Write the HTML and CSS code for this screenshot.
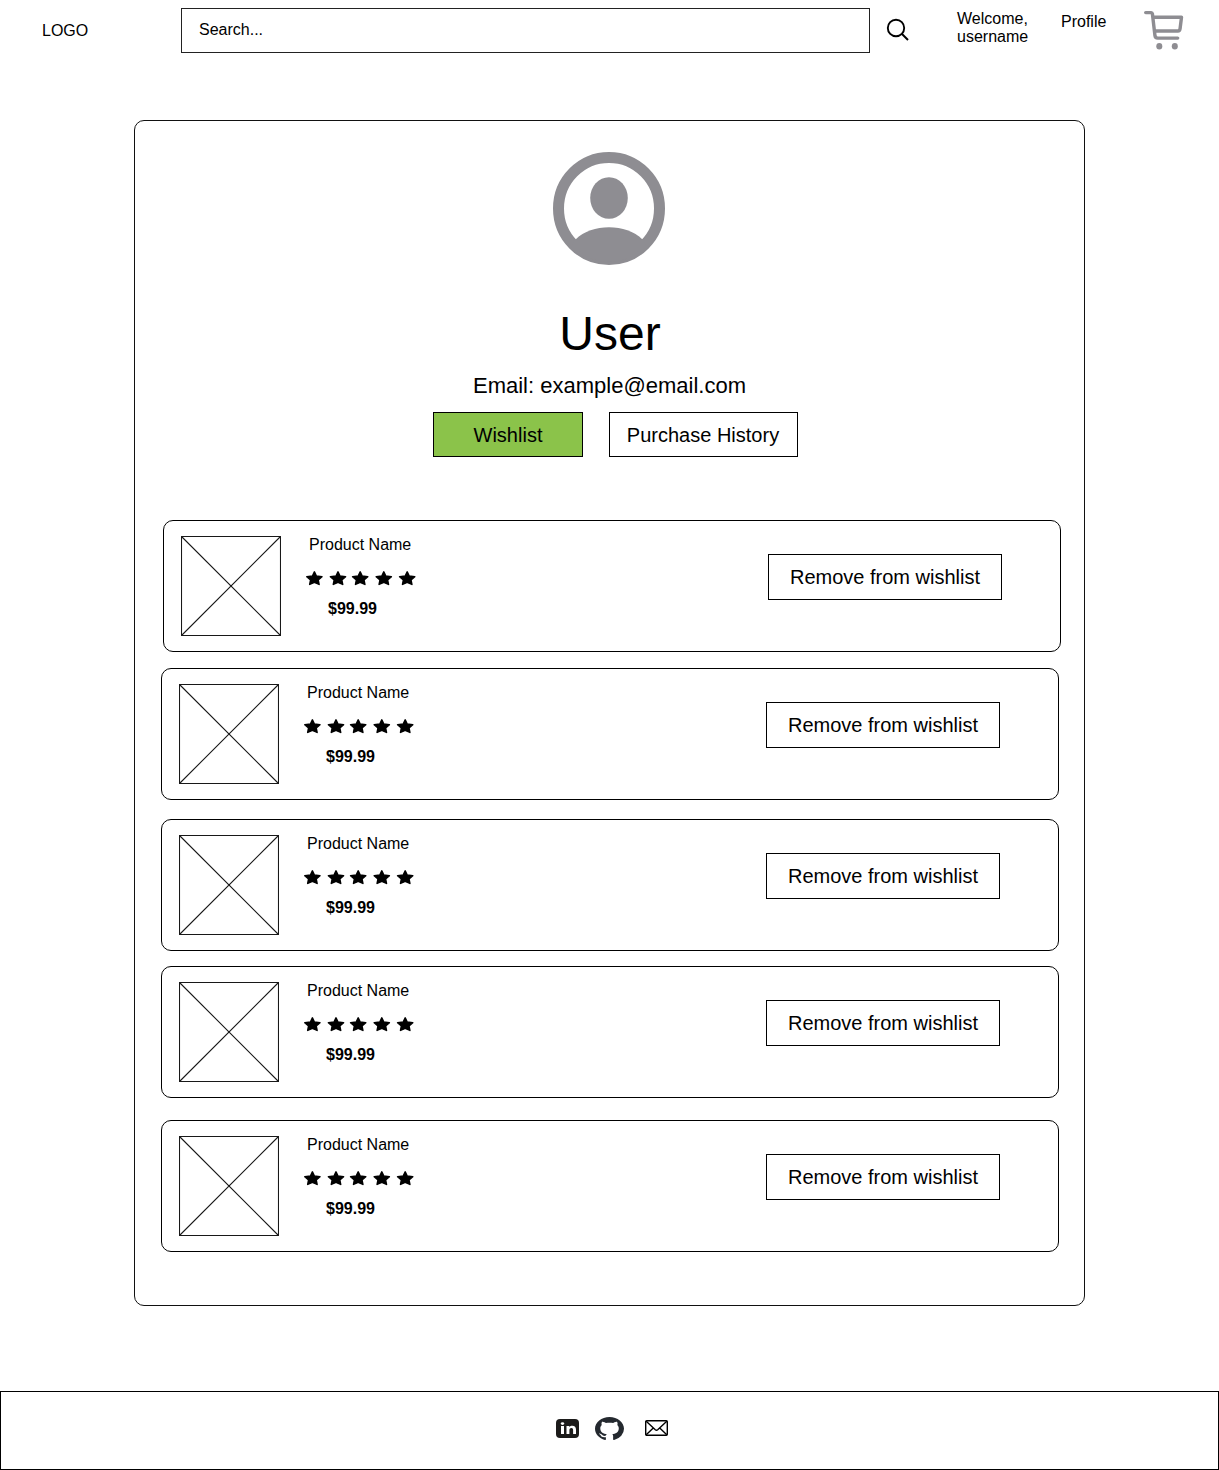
FILE: index.html
```html
<!DOCTYPE html>
<html lang="en">
<head>
<meta charset="utf-8">
<title>User profile</title>
<link rel="stylesheet" href="styles.css">
</head>
<body>
<svg class="defs" width="0" height="0">
  <defs>
    <path id="star" d="M8 .9 10 5.1 15.6 5.700 11.800 9 12.700 13.400 8 11.400 3.300 13.400 4.200 9 .4 5.700 6 5.100Z"/>
    <symbol id="stars" viewBox="0 0 110 16">
      <use href="#star" x=".4"/><use href="#star" x="24"/><use href="#star" x="46.2"/><use href="#star" x="69.8"/><use href="#star" x="93.2"/>
    </symbol>
    <symbol id="placeholder" viewBox="0 0 100 100">
      <path d="M.5.5h99v99H.5zM.5.5l99 99M99.5.5l-99 99"/>
    </symbol>
  </defs>
</svg>

<header class="header">
  <div class="logo">LOGO</div>
  <div class="search">Search...</div>
  <svg class="search-icon" width="24" height="24" viewBox="0 0 24 24"><circle cx="10" cy="10" r="8.2"/><path d="M16 16l6 6"/></svg>
  <div class="welcome">Welcome,<br>username</div>
  <a class="profile-link">Profile</a>
  <svg class="cart" width="42" height="40" viewBox="0 0 42 40">
    <path d="M2.700 2.600h5.500q1 0 1.200 1.200l2.500 21.500q.3 2.800 2.800 2.800h20M10.200 7.200h28.300L37.100 18.500q-.3 2.500-2.200 2.500H11.700"/>
    <ellipse cx="16.300" cy="36.200" rx="3" ry="3.200"/><ellipse cx="31.800" cy="36.200" rx="3" ry="3.200"/>
  </svg>
</header>

<main class="panel">
  <svg class="avatar" width="113" height="114" viewBox="0 0 113 114">
    <ellipse class="ring" cx="56" cy="56.500" rx="50.5" ry="51"/>
    <ellipse cx="56" cy="46" rx="18.8" ry="20.8"/>
    <path d="M22.5 87.500C31 79 43 75.200 56 75.200S81 79 89.500 87.500L93 92.500Q77 110 56 110T19 92.500Z"/>
  </svg>
  <h1 class="name">User</h1>
  <p class="email">Email: example@email.com</p>
  <nav class="tabs">
    <button class="tab tab-active">Wishlist</button>
    <button class="tab tab-history">Purchase History</button>
  </nav>

  <section class="wishlist">
    <article class="item item-first">
      <svg class="thumb"><use href="#placeholder"/></svg>
      <div class="details"><div class="product">Product Name</div><svg class="rating"><use href="#stars"/></svg><div class="price">$99.99</div></div>
      <button class="remove">Remove from wishlist</button>
    </article>
    <article class="item item-second">
      <svg class="thumb"><use href="#placeholder"/></svg>
      <div class="details"><div class="product">Product Name</div><svg class="rating"><use href="#stars"/></svg><div class="price">$99.99</div></div>
      <button class="remove">Remove from wishlist</button>
    </article>
    <article class="item item-third">
      <svg class="thumb"><use href="#placeholder"/></svg>
      <div class="details"><div class="product">Product Name</div><svg class="rating"><use href="#stars"/></svg><div class="price">$99.99</div></div>
      <button class="remove">Remove from wishlist</button>
    </article>
    <article class="item item-fourth">
      <svg class="thumb"><use href="#placeholder"/></svg>
      <div class="details"><div class="product">Product Name</div><svg class="rating"><use href="#stars"/></svg><div class="price">$99.99</div></div>
      <button class="remove">Remove from wishlist</button>
    </article>
    <article class="item">
      <svg class="thumb"><use href="#placeholder"/></svg>
      <div class="details"><div class="product">Product Name</div><svg class="rating"><use href="#stars"/></svg><div class="price">$99.99</div></div>
      <button class="remove">Remove from wishlist</button>
    </article>
  </section>
</main>

<footer class="footer">
  <svg class="linkedin" width="23" height="19" viewBox="0 0 23 19">
    <rect width="23" height="19" rx="4" fill="#1c1b1a"/>
    <g fill="#fff"><ellipse cx="6.500" cy="4.600" rx="1.700" ry="1.400"/><rect x="5" y="7" width="3" height="8"/><path d="M10.500 7h2.800v1.100c.7-.9 1.700-1.300 3-1.300 2.500 0 3.700 1.400 3.700 3.900V15h-2.900v-4c0-1.300-.5-2-1.700-2s-2 .8-2 2.100V15h-2.900z"/></g>
  </svg>
  <svg class="github" width="29" height="23" viewBox="0 0 16 15.600" preserveAspectRatio="none">
    <path fill="#24292f" d="M8 0C3.580 0 0 3.580 0 8c0 3.540 2.290 6.530 5.470 7.590.4.070.55-.17.55-.38 0-.19-.01-.82-.01-1.490-2.010.37-2.530-.49-2.690-.94-.09-.23-.48-.94-.82-1.130-.28-.15-.68-.52-.01-.53.63-.01 1.080.58 1.230.82.72 1.210 1.870.87 2.330.66.070-.52.28-.87.51-1.070-1.780-.2-3.640-.89-3.640-3.950 0-.87.31-1.590.82-2.150-.08-.2-.36-1.020.08-2.120 0 0 .67-.21 2.200.82.64-.18 1.320-.27 2-.27s1.360.09 2 .27c1.530-1.040 2.200-.82 2.200-.82.44 1.100.16 1.920.08 2.120.51.56.82 1.270.82 2.150 0 3.070-1.870 3.750-3.650 3.950.29.25.54.73.54 1.480 0 1.070-.01 1.930-.01 2.200 0 .21.15.46.55.38A8.010 8.010 0 0 0 16 8c0-4.420-3.580-8-8-8z"/>
  </svg>
  <svg class="mail" width="23" height="16" viewBox="0 0 23 16">
    <rect x=".7" y=".7" width="21.600" height="14.600" rx="1"/><path d="M1.200 1.200 10.300 9.700q1.200 1 2.400 0L21.800 1.200M1.200 14.800 8.300 8M21.800 14.800 14.700 8"/>
  </svg>
</footer>
</body>
</html>
```
FILE: styles.css
```css
* { box-sizing: border-box; }

body {
  margin: 0;
  background: #fff;
  color: #000;
  font: 16px/18px "Liberation Sans", Arial, sans-serif;
}

svg { display: block; flex: none; }
.defs { height: 0; }

button {
  background: #fff;
  border: 1px solid #000;
  border-radius: 0;
  padding: 0;
  color: #000;
  font: 20px/23px "Liberation Sans", Arial, sans-serif;
}

.header {
  display: flex;
  align-items: flex-start;
  height: 120px;
  padding: 8px 0 0 42px;
}
.logo { width: 139px; padding-top: 14px; }
.search {
  width: 689px;
  height: 45px;
  padding: 12px 17px;
  border: 1px solid #222;
}
.search-icon {
  margin: 10px 0 0 16px;
  fill: none;
  stroke: #000;
  stroke-width: 1.9;
}
.welcome { width: 104px; margin: 2px 0 0 47px; }
.profile-link { width: 82px; margin-top: 5px; }
.cart {
  margin-top: 2px;
  fill: none;
  stroke: #8e8d92;
  stroke-width: 3.4;
  stroke-linecap: round;
  stroke-linejoin: round;
}
.cart ellipse { fill: #8e8d92; stroke: none; }

.panel {
  width: 951px;
  height: 1186px;
  margin: 0 auto;
  padding-top: 31px;
  border: 1px solid #111;
  border-radius: 10px;
}
.avatar { margin: 0 auto; fill: #8e8d92; }
.avatar .ring { fill: none; stroke: #8e8d92; stroke-width: 11; }
.name {
  margin: 41px 0 0;
  padding-left: 1px;
  font-size: 48px;
  font-weight: 400;
  line-height: 54px;
  text-align: center;
}
.email {
  margin: 12px 0 0;
  font-size: 22px;
  line-height: 26px;
  text-align: center;
}
.tabs { display: flex; gap: 26px; margin: 13px 0 0 298px; }
.tab { width: 150px; height: 45px; padding-top: 2px; }
.tab-active { background: #8bc34a; }
.tab-history { width: 189px; padding-right: 1px; }

.wishlist { margin: 63px 0 0 26px; }
.item {
  display: flex;
  align-items: flex-start;
  width: 898px;
  height: 132px;
  padding: 15px 17px;
  border: 1px solid #000;
  border-radius: 10px;
}
.item-first { margin: 0 0 16px 2px; }
.item-second { margin-bottom: 19px; }
.item-third { margin-bottom: 15px; }
.item-fourth { margin-bottom: 22px; }
.thumb {
  width: 100px;
  height: 100px;
  fill: none;
  stroke: #181818;
  stroke-width: 1.1;
}
.details { width: 463px; padding-left: 25px; }
.product { margin-left: 3px; }
.rating {
  width: 110px;
  height: 16px;
  margin-top: 17px;
  stroke: #000;
  stroke-width: 1.5;
  stroke-linejoin: round;
}
.price { margin: 13px 0 0 22px; font-weight: 700; }
.remove { width: 234px; height: 46px; margin: 18px 0 0 24px; }

.footer {
  display: flex;
  align-items: flex-start;
  height: 79px;
  margin-top: 85px;
  padding: 25px 0 0 555px;
  border: 1px solid #000;
}
.linkedin { margin-top: 2px; }
.github { margin-left: 16px; }
.mail { margin: 3px 0 0 21px; fill: none; stroke: #000; stroke-width: 1.4; }
```
